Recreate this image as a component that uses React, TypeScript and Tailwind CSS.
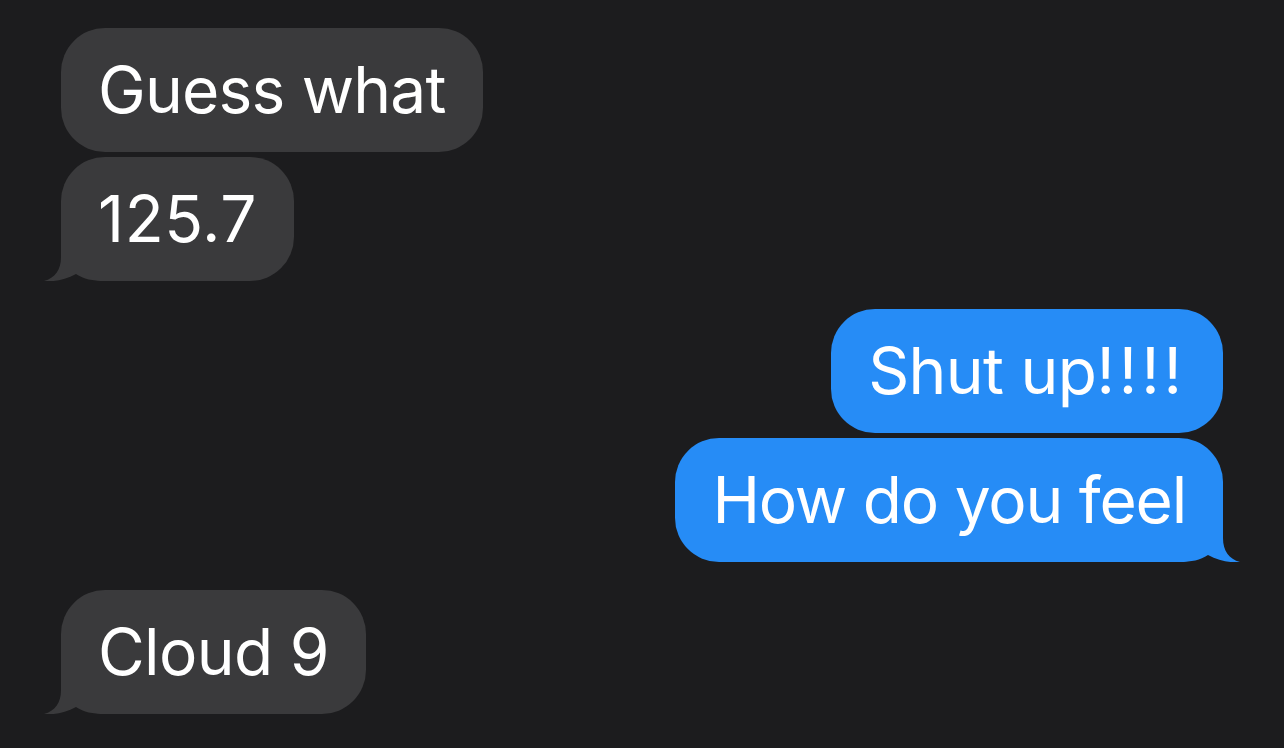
const GRAY = "#3a3a3c";
const BLUE = "#268cf6";

type Msg = { text: React.ReactNode; tail?: boolean; fit?: string };

const Tail = ({ side, color }: { side: "left" | "right"; color: string }) => (
    <svg
        viewBox="-17 -44 61 44"
        className={
            side === "left"
                ? "absolute bottom-0 left-[-17px] w-[61px] h-[44px]"
                : "absolute bottom-0 right-[-17px] w-[61px] h-[44px] -scale-x-100"
        }
    >
        <path
            d="M0,-44 L0,-24 C0,-11 -6,-3 -17,0 C-8,1 4,-1 15,-7 C23,-2 31,0 44,0 L44,-44 Z"
            fill={color}
        />
    </svg>
);

const Bubble = ({ msg, mine }: { msg: Msg; mine?: boolean }) => (
    <div
        className={`relative h-[124px] px-[37px] flex items-center rounded-[44px] text-white text-[64px] leading-none tracking-[-0.01em] ${mine ? "self-end bg-[#268cf6]" : "self-start bg-[#3a3a3c]"}`}
    >
        {msg.tail && <Tail side={mine ? "right" : "left"} color={mine ? BLUE : GRAY} />}
        <span className={`relative ${msg.fit ?? ""}`}>{msg.text}</span>
    </div>
);

const Group = ({ msgs, mine }: { msgs: Msg[]; mine?: boolean }) => (
    <div className="flex flex-col gap-[5px]">
        {msgs.map((m, i) => (
            <Bubble key={i} msg={m} mine={mine} />
        ))}
    </div>
);

export default function App() {
    return (
        <div
            className="w-full h-[748px] overflow-hidden bg-[#1c1c1e] pt-[28px] px-[61px] flex flex-col gap-[28px]"
            style={{ fontFamily: "Inter, 'Liberation Sans', sans-serif" }}
        >
            <Group msgs={[{ text: "Guess what", fit: "tracking-[-0.8px]" }, { text: "125.7", tail: true, fit: "tracking-[0.6px]" }]} />
            <Group
                mine
                msgs={[
                    { text: <>Shut up<span className="tracking-[4px]">!!!!</span></> },
                    { text: "How do you feel", tail: true, fit: "tracking-[-1.2px]" },
                ]}
            />
            <Group msgs={[{ text: "Cloud 9", tail: true }]} />
        </div>
    );
}
